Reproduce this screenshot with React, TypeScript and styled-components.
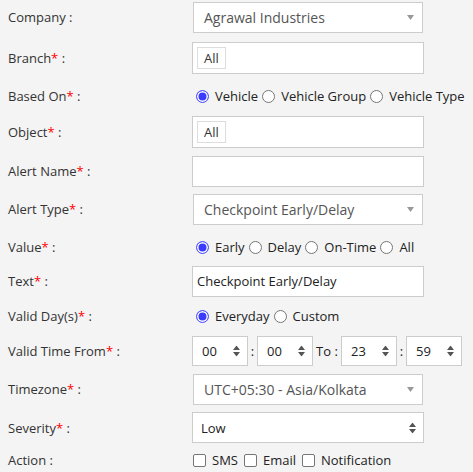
import styled, { createGlobalStyle } from 'styled-components';

const Global = createGlobalStyle`
  html, body {
    margin: 0;
    background: #f4f4f4;
  }
  body {
    font-family: "Open Sans", "Liberation Sans", sans-serif;
    color: #333;
  }
`;

const Form = styled.div`
  display: flex;
  flex-direction: column;
  padding: 0 8px;
`;

const Row = styled.div<{ $h: number }>`
  display: grid;
  grid-template-columns: 184px 1fr;
  align-items: center;
  height: ${(p) => p.$h}px;
`;

const Label = styled.div`
  font-size: 13px;
  color: #333;
  white-space: nowrap;
`;

const Star = styled.span`
  color: #f00;
`;

const Field = styled.div`
  display: flex;
  align-items: center;
  white-space: nowrap;
`;

const SelectBox = styled.div`
  position: relative;
  box-sizing: border-box;
  width: 230px;
  height: 31px;
  margin-left: 1px;
  padding-left: 10px;
  display: flex;
  align-items: center;
  background: #fff;
  border: 1px solid #ccc;
  font-size: 14px;
  color: #555;
`;

const Caret = styled.svg`
  position: absolute;
  right: 8px;
  top: 50%;
  transform: translateY(-40%);
`;

const TextBox = styled.div<{ $tall?: boolean; $pad?: number }>`
  position: relative;
  box-sizing: border-box;
  width: 232px;
  height: ${(p) => (p.$tall ? 32 : 31)}px;
  padding-left: ${(p) => p.$pad ?? 4}px;
  display: flex;
  align-items: center;
  background: #fff;
  border: 1px solid #ccc;
  font-size: 13px;
  color: #222;
`;

const Chip = styled.span`
  box-sizing: border-box;
  height: 22px;
  padding: 0 6px;
  display: flex;
  align-items: center;
  border: 1px solid #ddd;
  font-size: 13px;
  color: #333;
`;

const Radio = styled.span<{ $on?: boolean }>`
  box-sizing: border-box;
  width: 13px;
  height: 13px;
  margin: 0 6px 0 4px;
  border-radius: 50%;
  border: ${(p) => (p.$on ? '1px solid #5a5aff' : '1px solid #767676')};
  background: ${(p) => (p.$on ? '#3b3bff' : '#fff')};
  box-shadow: ${(p) => (p.$on ? 'inset 0 0 0 1.5px #fff' : 'none')};
`;

const Check = styled.span`
  box-sizing: border-box;
  width: 13px;
  height: 13px;
  margin: 0 6px 0 6px;
  border-radius: 2px;
  border: 1px solid #767676;
  background: #fff;
`;

const Choice = styled.label`
  display: flex;
  align-items: center;
  flex-shrink: 0;
  white-space: nowrap;
  font-size: 13px;
  color: #222;

  &:first-child > ${Check} {
    margin-left: 1px;
  }
`;

const TimeBox = styled.div`
  position: relative;
  box-sizing: border-box;
  width: 56px;
  height: 30px;
  padding-left: 9px;
  display: flex;
  align-items: center;
  background: #fff;
  border: 1px solid #ccc;
  font-size: 13px;
  color: #222;
`;

const Spin = styled.svg`
  position: absolute;
  right: 7px;
  top: 50%;
  transform: translateY(-50%);
`;

const Sep = styled.span<{ $w: number }>`
  width: ${(p) => p.$w}px;
  text-align: center;
  font-size: 13px;
  color: #222;
  white-space: nowrap;
`;

const Arrow = () => (
  <Caret width="7" height="5" viewBox="0 0 7 5">
    <path d="M0 0h7L3.5 5z" fill="#999" />
  </Caret>
);

const Updown = () => (
  <Spin width="7" height="11" viewBox="0 0 7 11">
    <path d="M3.5 0L7 4.5H0z M3.5 11L0 6.5h7z" fill="#555" />
  </Spin>
);

const Time = ({ v }: { v: string }) => (
  <TimeBox>
    {v}
    <Updown />
  </TimeBox>
);

const Req = ({ children }: { children: string }) => (
  <Label>
    {children}
    <Star>*</Star> :
  </Label>
);

const App = () => {
  return (
    <>
      <Global />
      <Form>
        <Row $h={34}>
          <Label>Company :</Label>
          <Field>
            <SelectBox>
              Agrawal Industries
              <Arrow />
            </SelectBox>
          </Field>
        </Row>
        <Row $h={47}>
          <Req>Branch</Req>
          <Field>
            <TextBox $tall>
              <Chip>All</Chip>
            </TextBox>
          </Field>
        </Row>
        <Row $h={30}>
          <Req>Based On</Req>
          <Field>
            <Choice><Radio $on />Vehicle</Choice>
            <Choice><Radio />Vehicle Group</Choice>
            <Choice><Radio />Vehicle Type</Choice>
          </Field>
        </Row>
        <Row $h={42}>
          <Req>Object</Req>
          <Field>
            <TextBox $tall>
              <Chip>All</Chip>
            </TextBox>
          </Field>
        </Row>
        <Row $h={36}>
          <Req>Alert Name</Req>
          <Field>
            <TextBox />
          </Field>
        </Row>
        <Row $h={40}>
          <Req>Alert Type</Req>
          <Field>
            <SelectBox>
              Checkpoint Early/Delay
              <Arrow />
            </SelectBox>
          </Field>
        </Row>
        <Row $h={36}>
          <Req>Value</Req>
          <Field>
            <Choice><Radio $on />Early</Choice>
            <Choice><Radio />Delay</Choice>
            <Choice><Radio />On-Time</Choice>
            <Choice><Radio />All</Choice>
          </Field>
        </Row>
        <Row $h={32}>
          <Req>Text</Req>
          <Field>
            <TextBox>Checkpoint Early/Delay</TextBox>
          </Field>
        </Row>
        <Row $h={38}>
          <Req>Valid Day(s)</Req>
          <Field>
            <Choice><Radio $on />Everyday</Choice>
            <Choice><Radio />Custom</Choice>
          </Field>
        </Row>
        <Row $h={31}>
          <Req>Valid Time From</Req>
          <Field>
            <Time v="00" />
            <Sep $w={9}>:</Sep>
            <Time v="00" />
            <Sep $w={28}>To :</Sep>
            <Time v="23" />
            <Sep $w={9}>:</Sep>
            <Time v="59" />
          </Field>
        </Row>
        <Row $h={46}>
          <Req>Timezone</Req>
          <Field>
            <SelectBox>
              UTC+05:30 - Asia/Kolkata
              <Arrow />
            </SelectBox>
          </Field>
        </Row>
        <Row $h={31}>
          <Req>Severity</Req>
          <Field>
            <TextBox $pad={8}>
              Low
              <Updown />
            </TextBox>
          </Field>
        </Row>
        <Row $h={34}>
          <Label>Action :</Label>
          <Field>
            <Choice><Check />SMS</Choice>
            <Choice><Check />Email</Choice>
            <Choice><Check />Notification</Choice>
          </Field>
        </Row>
      </Form>
    </>
  );
};

export default App;
